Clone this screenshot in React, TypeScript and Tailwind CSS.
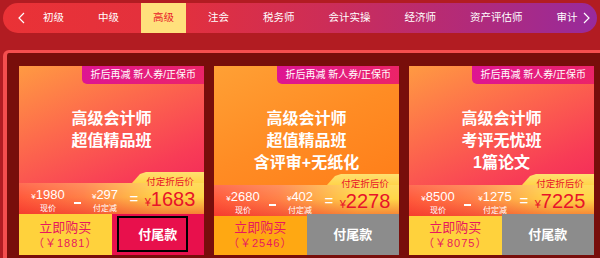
import React from 'react'

const tabs = ['初级', '中级', '高级', '注会', '税务师', '会计实操', '经济师', '资产评估师', '审计']

type Card = {
  title: string[]
  price: string
  minus: string
  final: string
  buy: string
  top: string
  buyBg: string
  payBg: string
  focused?: boolean
}

const cards: Card[] = [
  {
    title: ['高级会计师', '超值精品班'],
    price: '1980',
    minus: '297',
    final: '1683',
    buy: '1881',
    top: 'bg-[linear-gradient(155deg,#ff9a42_0%,#fd6a4c_35%,#f83c56_70%,#f0205c_100%)]',
    buyBg: 'bg-[#ffd23c]',
    payBg: 'bg-[#e8104c]',
    focused: true,
  },
  {
    title: ['高级会计师', '超值精品班', '含评审+无纸化'],
    price: '2680',
    minus: '402',
    final: '2278',
    buy: '2546',
    top: 'bg-[linear-gradient(155deg,#ffa035_0%,#ff8c24_45%,#ff7a16_100%)]',
    buyBg: 'bg-[#ffa812]',
    payBg: 'bg-[#8c8c8c]',
  },
  {
    title: ['高级会计师', '考评无忧班', '1篇论文'],
    price: '8500',
    minus: '1275',
    final: '7225',
    buy: '8075',
    top: 'bg-[linear-gradient(155deg,#ff9a42_0%,#fd6a4c_35%,#f83c56_70%,#f0205c_100%)]',
    buyBg: 'bg-[#ffd23c]',
    payBg: 'bg-[#8c8c8c]',
  },
]

function Yen({ size }: { size: string }) {
  return <span className={size}>¥</span>
}

function CourseCard({ c }: { c: Card }) {
  return (
    <div className="w-[185px] shrink-0 flex flex-col">
      <div className={`h-[148px] flex flex-col ${c.top}`}>
        <div className="flex justify-end">
          <div className="h-[18px] px-[8px] rounded-bl-[5px] bg-[linear-gradient(90deg,#de1592,#ec2468)] text-white text-[10px] leading-[18px]">
            折后再减 新人券/正保币
          </div>
        </div>
        <div className="mt-[24px] text-center text-white font-bold text-[16px] leading-[22px]">
          {c.title.map((t) => (
            <div key={t}>{t}</div>
          ))}
        </div>
        <div className="flex-1" />
        <div className="flex justify-end">
          <div className="h-[11px] w-[72px] bg-[linear-gradient(180deg,#ffe070,#ffd34a)] [clip-path:polygon(14px_0,100%_0,100%_100%,0_100%,8px_2px)] rounded-tl-[4px]" />
        </div>
        <div className="relative h-[31px] flex pl-[4px] bg-[linear-gradient(90deg,#ff5a3c_0%,#ff8148_35%,#ffb848_62%,#ffd648_78%,#ffd648_100%)]">
          <div className="absolute inset-0 bg-[linear-gradient(180deg,rgba(255,255,255,0.12)_0%,rgba(255,255,255,0)_45%,rgba(235,25,30,0.45)_100%)]" />
          <div className="relative w-[50px] pt-[5px] flex flex-col items-center text-white">
            <div className="text-[13px] leading-[14px]">
              <Yen size="text-[8px]" />
              {c.price}
            </div>
            <div className="text-[8px] leading-[10px]">现价</div>
          </div>
          <div className="relative w-[8px] flex justify-center pt-[19px]">
            <div className="w-[7px] h-[2px] bg-white" />
          </div>
          <div className="relative w-[48px] pt-[5px] flex flex-col items-center text-white">
            <div className="text-[13px] leading-[14px]">
              <Yen size="text-[8px]" />
              {c.minus}
            </div>
            <div className="text-[8px] leading-[10px]">付定减</div>
          </div>
          <div className="relative w-[10px] text-center text-white text-[15px] leading-[31px]">=</div>
          <div className="relative w-[62px] -mt-[7px] flex flex-col items-center text-[#e8142a]">
            <div className="text-[9.5px] leading-[12px]">付定折后价</div>
            <div className="text-[20px] leading-[22px]">
              <Yen size="text-[11px]" />
              {c.final}
            </div>
          </div>
        </div>
      </div>
      <div className="h-[41px] flex">
        <div className={`flex-1 flex flex-col items-center justify-center text-[#e8185e] ${c.buyBg}`}>
          <div className="text-[13px] leading-[16px]">立即购买</div>
          <div className="text-[11px] leading-[14px] tracking-[1px]">（￥{c.buy}）</div>
        </div>
        <div className={`relative flex-1 flex items-center justify-center text-white font-bold text-[13px] ${c.payBg}`}>
          付尾款
          {c.focused && (
            <div className="absolute left-[5px] right-[16px] top-[2px] bottom-[3px] border-2 border-black" />
          )}
        </div>
      </div>
    </div>
  )
}

export default function App() {
  return (
    <div className="w-[600px] h-[258px] overflow-hidden bg-[#b21c22] font-['Liberation_Sans','Noto_Sans_CJK_SC',sans-serif]">
      <div className="pt-[3px] pl-[3px] pr-[3px]">
        <div className="relative h-[30px] rounded-[15px] overflow-hidden flex items-stretch pl-[8px] bg-[linear-gradient(90deg,#ea3236_0%,#e2303e_30%,#cc2d58_55%,#b02a7c_80%,#982a9c_100%)] text-white text-[10.5px]">
          <div className="w-[20px] flex items-center justify-center">
            <svg width="7" height="12" viewBox="0 0 7 12" fill="none" stroke="white" strokeWidth="1.2">
              <path d="M6 1L1 6l5 5" />
            </svg>
          </div>
          <div className="flex gap-[10px]">
            {tabs.map((t) => (
              <div
                key={t}
                className={`px-3 flex items-center whitespace-nowrap ${t === '高级' ? 'bg-[#ffe07c] text-[#e8202a]' : ''}`}
              >
                {t}
              </div>
            ))}
          </div>
          <div className="absolute right-[4px] top-0 h-full w-[14px] flex items-center justify-center">
            <svg width="7" height="12" viewBox="0 0 7 12" fill="none" stroke="white" strokeWidth="1.2">
              <path d="M1 1l5 5-5 5" />
            </svg>
          </div>
        </div>
      </div>
      <div className="mt-[17px] ml-[3px] w-[620px] h-[220px] rounded-tl-[6px] border-t-[3px] border-l-[4px] border-[#f44e4e] bg-[#780e0b] pt-[13px] pl-[12px] flex gap-[10px]">
        {cards.map((c) => (
          <CourseCard key={c.final} c={c} />
        ))}
      </div>
    </div>
  )
}
